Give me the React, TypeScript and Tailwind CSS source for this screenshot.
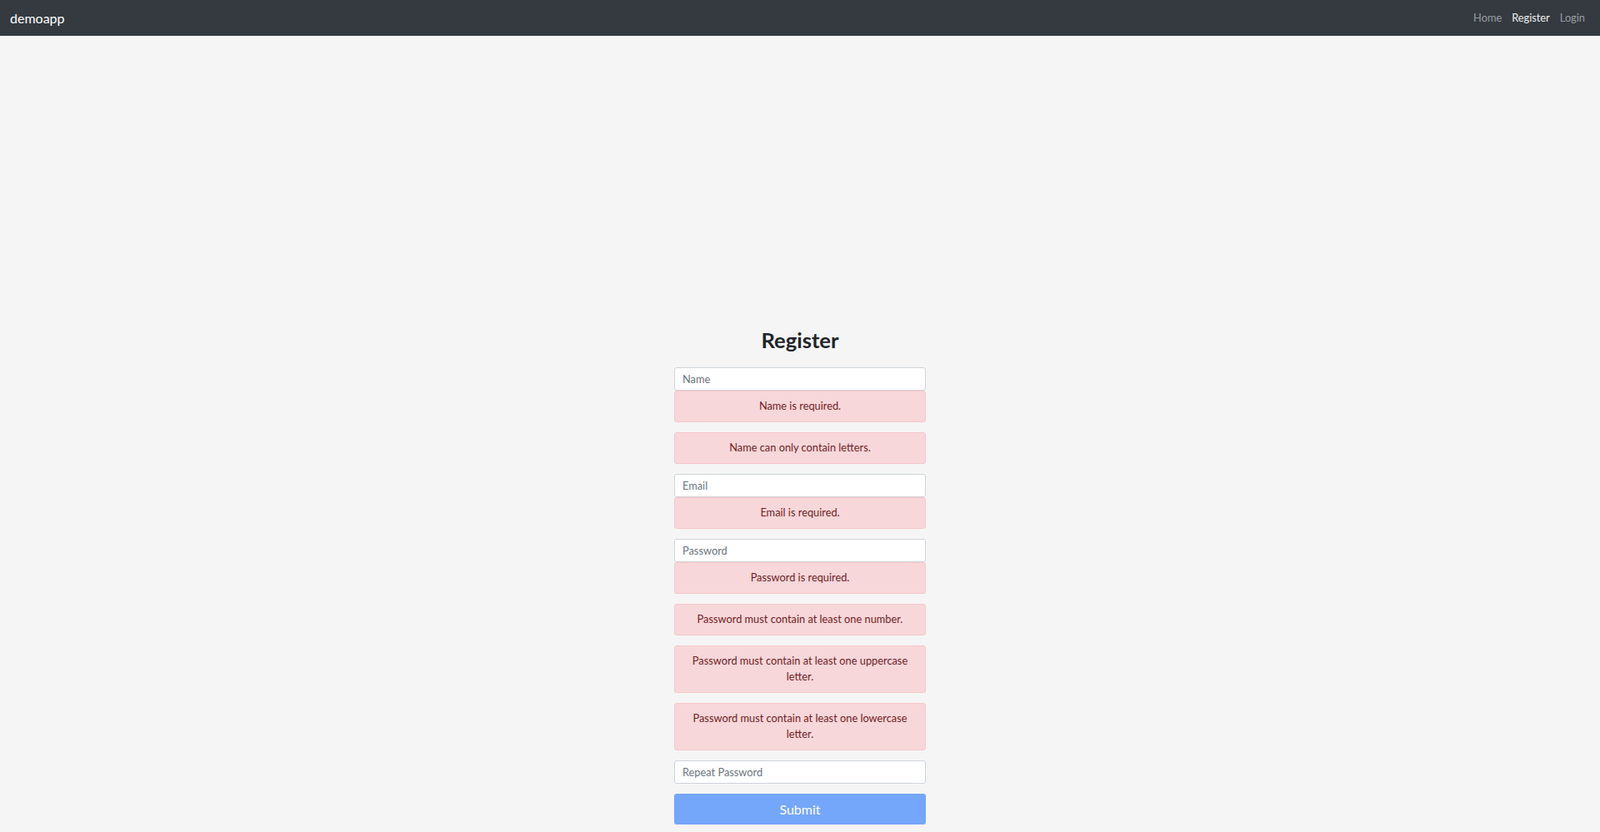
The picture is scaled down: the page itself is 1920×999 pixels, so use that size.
import React from "react";

const font = { fontFamily: 'Lato, "Noto Sans", sans-serif' };

function Alert({ children }: { children: React.ReactNode }) {
  return (
    <div className="bg-[#f8d7da] border border-[#f5c6cb] text-[#721c24] rounded-[3px] px-[16px] py-[8.4px] text-[12.8px] leading-[19.2px] text-center">
      {children}
    </div>
  );
}

function Field({ placeholder, type = "text" }: { placeholder: string; type?: string }) {
  return (
    <input
      type={type}
      placeholder={placeholder}
      className="block w-full h-[28px] bg-white border border-[#ced4da] rounded-[3px] px-[9px] text-[12.8px] text-[#495057] placeholder:text-[#6c757d] outline-none"
    />
  );
}

export default function App() {
  return (
    <div className="min-h-screen bg-[#f5f5f5]" style={font}>
      <nav className="h-[43px] bg-[#343a40] flex items-center justify-between pl-[12px] pr-[12px] pt-[1px]">
        <a className="text-white text-[16px]">demoapp</a>
        <ul className="flex text-[12.8px]">
          <li className="px-[6px] text-[#9a9da0]">Home</li>
          <li className="px-[6px] text-[#f0f0f1]">Register</li>
          <li className="px-[6px] text-[#9a9da0]">Login</li>
        </ul>
      </nav>

      <main className="pt-[350px] pb-[10px] flex justify-center">
        <form className="w-[302px] flex flex-col" onSubmit={(e) => e.preventDefault()}>
          <h2 className="text-center text-[25.6px] leading-[30.7px] font-bold text-[#212529] mb-[17px]">
            Register
          </h2>

          <div className="mb-[12px]">
            <Field placeholder="Name" />
            <Alert>Name is required.</Alert>
          </div>
          <div className="mb-[12px]">
            <Alert>Name can only contain letters.</Alert>
          </div>

          <div className="mb-[12px]">
            <Field placeholder="Email" type="email" />
            <Alert>Email is required.</Alert>
          </div>

          <div className="flex flex-col gap-[12px] mb-[12px]">
            <div>
              <Field placeholder="Password" type="password" />
              <Alert>Password is required.</Alert>
            </div>
            <Alert>Password must contain at least one number.</Alert>
            <Alert>Password must contain at least one uppercase letter.</Alert>
            <Alert>Password must contain at least one lowercase letter.</Alert>
          </div>

          <div className="mb-[12px]">
            <Field placeholder="Repeat Password" type="password" />
          </div>

          <button
            type="submit"
            disabled
            className="h-[37px] w-full rounded-[3px] bg-[#74a6fa] text-white text-[16px]"
          >
            Submit
          </button>
        </form>
      </main>
    </div>
  );
}
